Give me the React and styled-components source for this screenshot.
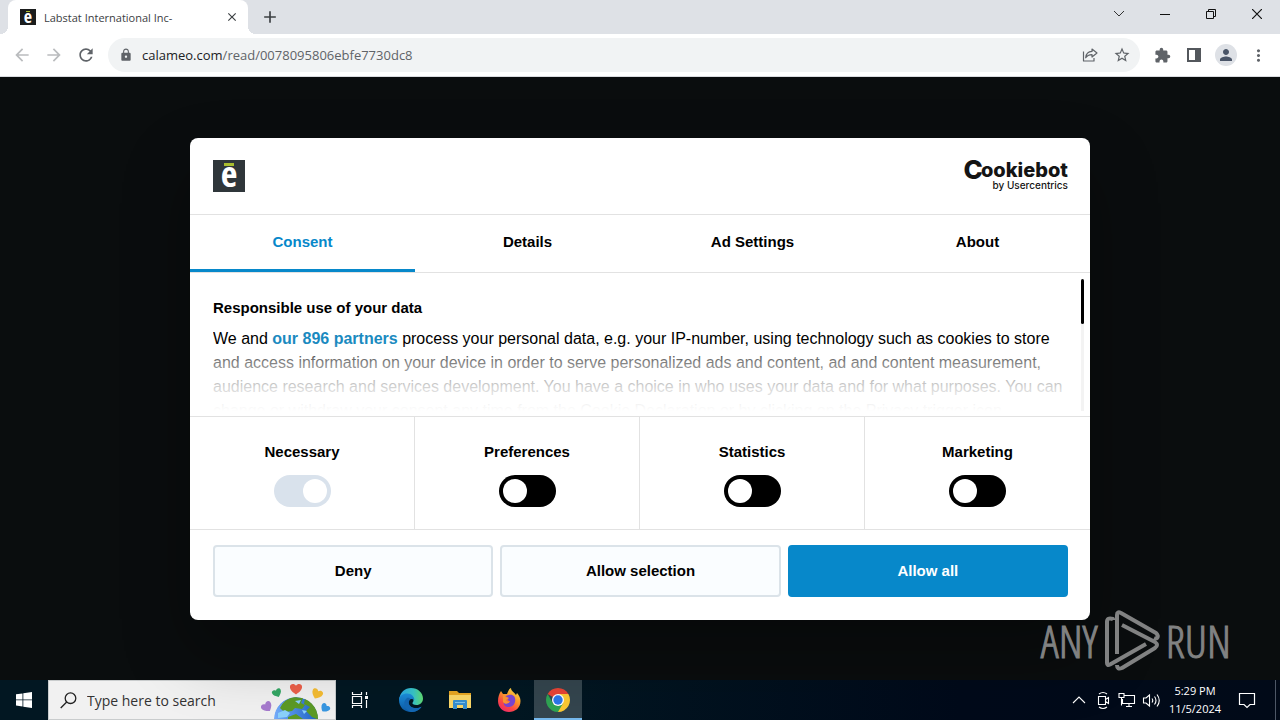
import styled, { createGlobalStyle, css } from 'styled-components'
import {
  MdArrowBack,
  MdArrowForward,
  MdRefresh,
  MdLock,
  MdStarBorder,
  MdExtension,
  MdPerson,
  MdMoreVert,
  MdClose,
  MdAdd
} from 'react-icons/md'

const GlobalStyle = createGlobalStyle`
  *, *::before, *::after {
    box-sizing: border-box;
  }

  body {
    margin: 0;
    font-family: 'Liberation Sans', Arial, sans-serif;
    background-color: #0a0d0e;
  }

  button, input {
    font: inherit;
    margin: 0;
  }
`

const uiFont = "'Open Sans', 'Noto Sans', sans-serif"
const narrowFont = "'Open Sans Condensed', 'Roboto Condensed', 'Liberation Sans Narrow', sans-serif"

const Screen = styled.div`
  display: flex;
  flex-direction: column;
  height: 100vh;
  overflow: hidden;
`

const plainButton = css`
  display: flex;
  align-items: center;
  justify-content: center;
  flex: none;
  padding: 0;
  border: 0;
  background: none;
`

/* Browser window */

const TabStrip = styled.div`
  display: flex;
  height: 34px;
  padding-left: 8px;
  background-color: #dee1e6;
  font-family: ${uiFont};
`

const BrowserTab = styled.div`
  position: relative;
  display: flex;
  align-items: center;
  gap: 8px;
  width: 240px;
  padding: 0 8px 0 12px;
  background-color: #fff;
  border-radius: 8px 8px 0 0;
  color: #3c4043;
  font-size: 11px;

  &::before,
  &::after {
    content: '';
    position: absolute;
    bottom: 0;
    width: 8px;
    height: 8px;
  }

  &::before {
    right: 100%;
    background: radial-gradient(circle at 0 0, #dee1e6 8px, #fff 8px);
  }

  &::after {
    left: 100%;
    background: radial-gradient(circle at 100% 0, #dee1e6 8px, #fff 8px);
  }
`

const TabTitle = styled.span`
  flex: 1;
  white-space: nowrap;
`

const TabButton = styled.button`
  ${plainButton}
  width: ${props => props.$size}px;
  color: #3c4043;
`

const NewTab = styled(TabButton)`
  margin-left: 8px;
`

const WindowControls = styled.div`
  display: flex;
  height: 28px;
  margin-left: auto;
`

const WindowButton = styled.button`
  ${plainButton}
  width: 46px;
`

const Toolbar = styled.div`
  display: flex;
  align-items: center;
  height: 43px;
  padding: 0 6px;
  border-bottom: 1px solid #dadce0;
  background-color: #fff;
  font-family: ${uiFont};
`

const ToolButton = styled.button`
  ${plainButton}
  width: 32px;
  height: 32px;
  color: ${props => (props.$faded ? '#babcbe' : '#5f6368')};
`

const Avatar = styled.span`
  display: flex;
  align-items: center;
  justify-content: center;
  width: 22px;
  height: 22px;
  border-radius: 50%;
  background-color: #dee1e6;
  color: #4a5568;
`

const AddressBar = styled.div`
  display: flex;
  align-items: center;
  flex: 1;
  height: 34px;
  margin: 0 6px;
  padding: 0 2px 0 11px;
  border-radius: 17px;
  background-color: #f1f3f4;
  color: #5f6368;
`

const Address = styled.a`
  flex: 1;
  margin-left: 9px;
  color: #5f6368;
  font-size: 13px;
  text-decoration: none;

  b {
    color: #202124;
    font-weight: 400;
  }
`

/* Brand marks */

const CalameoMark = styled.span`
  position: relative;
  display: flex;
  justify-content: center;
  flex: none;
  width: ${props => props.$size}px;
  height: ${props => props.$size}px;
  background-color: ${props => (props.$size > 20 ? '#2f363a' : '#1b1d1d')};
  color: #fff;
  font-family: ${narrowFont};
  font-size: ${props => (props.$size > 20 ? 36 : 18)}px;
  font-weight: 700;
  line-height: ${props => (props.$size > 20 ? 28 : 14)}px;

  &::after {
    content: '';
    position: absolute;
    top: 12%;
    left: 35%;
    width: 30%;
    height: 9%;
    background-color: #a9bd2f;
  }
`

const CookiebotLogo = styled.a`
  display: flex;
  flex-direction: column;
  align-items: flex-end;
  color: #141414;
  font-family: Inter, sans-serif;
  text-decoration: none;
`

const CookiebotName = styled.span`
  display: flex;
  align-items: center;
  font-size: 20px;
  font-weight: 800;
  line-height: 20px;
`

const CookiebotInitial = styled.span`
  margin-right: -2px;
  font-size: 26px;
`

const CookiebotOwner = styled.span`
  font-size: 10px;
  font-weight: 500;
  line-height: 11px;
`

/* Consent dialog */

const Page = styled.main`
  position: relative;
  display: flex;
  align-items: center;
  justify-content: center;
  flex: 1;
  min-height: 0;
  background-color: #0a0d0e;
`

const Dialog = styled.section`
  width: 100%;
  max-width: 900px;
  border-radius: 8px;
  background-color: #fff;
  box-shadow: 0 32px 68px rgba(0, 0, 0, 0.3);
  color: #141414;
  font-size: 15px;
  line-height: 24px;
`

const DialogHeader = styled.header`
  display: flex;
  align-items: center;
  justify-content: space-between;
  height: 77px;
  padding: 0 22px 0 23px;
  border-bottom: 1px solid #e2e2e2;
`

const DialogTabs = styled.nav`
  display: grid;
  grid-template-columns: repeat(4, 1fr);
  height: 58px;
  border-bottom: 1px solid #e2e2e2;
`

const DialogTab = styled.button`
  ${plainButton}
  padding-top: 1px;
  border-bottom: 3px solid ${props => (props.$active ? '#0788ca' : 'transparent')};
  color: ${props => (props.$active ? '#0788ca' : '#000')};
  font-weight: 700;
`

const DialogBody = styled.div`
  display: flex;
  height: 144px;
  padding: 6px 6px 5px 23px;
  border-bottom: 1px solid #e2e2e2;
`

const Statement = styled.div`
  position: relative;
  flex: 1;
  overflow: hidden;
  padding: 17px 12px 0 0;
  color: #000;

  &::after {
    content: '';
    position: absolute;
    right: 0;
    bottom: 0;
    left: 0;
    height: 68px;
    background: linear-gradient(rgba(255, 255, 255, 0), rgba(255, 255, 255, 0.5) 28%, rgba(255, 255, 255, 0.85) 68%, #fff);
  }
`

const StatementTitle = styled.h2`
  margin: 0 0 7px;
  font-size: 15px;
  line-height: 24px;
`

const StatementText = styled.p`
  margin: 0;
  font-size: 16px;
`

const PartnersLink = styled.a`
  color: #1a8ac0;
  font-weight: 700;
  text-decoration: none;
`

const ScrollTrack = styled.div`
  width: 3px;
  background-color: #f3f3f3;
`

const ScrollThumb = styled.div`
  height: 45px;
  border-radius: 2px;
  background-color: #000;
`

const Choices = styled.div`
  display: grid;
  grid-template-columns: repeat(4, 1fr);
  height: 113px;
  border-bottom: 1px solid #e2e2e2;
`

const Choice = styled.label`
  display: flex;
  flex-direction: column;
  align-items: center;
  gap: 11px;
  padding-top: 23px;
  color: #000;
  font-weight: 700;

  &:not(:last-child) {
    border-right: 1px solid #e2e2e2;
  }
`

const Toggle = styled.input`
  appearance: none;
  display: flex;
  justify-content: flex-start;
  width: 57px;
  height: 32px;
  padding: 4px;
  border-radius: 16px;
  background-color: #000;

  &::before {
    content: '';
    width: 24px;
    height: 24px;
    border-radius: 50%;
    background-color: #fff;
  }

  &:checked {
    justify-content: flex-end;
  }

  &:disabled {
    background-color: #d9e2ec;
  }
`

const Actions = styled.footer`
  display: grid;
  grid-template-columns: repeat(3, 1fr);
  gap: 7px;
  padding: 15px 22px 23px 23px;
`

const Action = styled.button`
  height: 52px;
  border: 2px solid ${props => (props.$primary ? '#0788ca' : '#dbe3e9')};
  border-radius: 4px;
  background-color: ${props => (props.$primary ? '#0788ca' : '#fafdff')};
  color: ${props => (props.$primary ? '#fff' : '#000')};
  font-weight: 700;
`

/* Lies over the page corner */
const Watermark = styled.div`
  position: absolute;
  right: 49px;
  bottom: 8px;
  display: flex;
  align-items: center;
  gap: 6px;
  color: #818282;
  font-family: 'Open Sans Condensed Light', 'Roboto Condensed', 'Liberation Sans Narrow', 'Open Sans Condensed', sans-serif;
  font-size: 45px;
  line-height: 62px;
  -webkit-text-stroke: 1px #818282;
`

/* Taskbar */

const Taskbar = styled.footer`
  display: flex;
  flex: none;
  height: 40px;
  background: linear-gradient(90deg, #021722, #021722 40%, #010a1a 75%, #010a18);
  color: #fff;
  font-family: ${uiFont};
`

const TaskButton = styled.button`
  ${plainButton}
  width: 48px;
  margin-right: ${props => props.$gap || 1}px;
  background-color: ${props => (props.$open ? '#34454e' : 'transparent')};
  box-shadow: ${props => (props.$open ? 'inset 0 -2px #76b9ed' : 'none')};
`

const StartButton = styled.button`
  ${plainButton}
  width: 48px;
`

const SearchBox = styled.label`
  display: flex;
  align-items: center;
  width: 288px;
  padding-left: 11px;
  border: 1px solid #c9cccd;
  background-color: #f1f1f1;
`

const SearchInput = styled.input`
  flex: 1;
  min-width: 0;
  padding: 0 0 0 10px;
  border: 0;
  background: none;
  font-size: 14px;

  &::placeholder {
    color: #333;
    opacity: 1;
  }
`

const Tray = styled.div`
  display: flex;
  align-items: center;
  margin-left: auto;
`

const TrayButton = styled.button`
  ${plainButton}
  width: 24px;
  height: 40px;
`

const Clock = styled.time`
  width: 64px;
  font-size: 11px;
  line-height: 18px;
  text-align: center;
`

const ActionCenter = styled(TrayButton)`
  width: 40px;
  margin-right: 8px;
`

const ShowDesktop = styled.button`
  ${plainButton}
  width: 5px;
  height: 40px;
  border-left: 1px solid #4d5766;
`

const ShareIcon = () => (
  <svg width="16" height="16" viewBox="0 0 16 16" fill="none" stroke="#5f6368" strokeWidth="1.2" strokeLinejoin="round">
    <path d="M1.500 4.500v9.500h10.500v-3M10 2l5 4-5 4V7.600C7 7.600 5 8.500 3.700 10.800 4 7 6.500 4.600 10 4.400z" />
  </svg>
)

const SidePanelIcon = () => (
  <svg width="14" height="14" viewBox="0 0 14 14">
    <path d="M0 0h14v14H0zM2 2v10h6V2z" fill="#53575c" fillRule="evenodd" />
  </svg>
)

const WatermarkIcon = () => (
  <svg width="56" height="62" viewBox="0 0 56 62" fill="none" stroke="#818282" strokeWidth="4" strokeLinejoin="round">
    <path d="M9 10V9q-6-2-6 3v41q0 3 3 1.500L42 34" />
    <path d="M13 44V5q0-4 4-2l35 20q3 3 1 5-1 1-3 0" />
    <path d="M18 15l33 17q4 3 0 6L18 58q-5 2-5-3" />
  </svg>
)

const WindowsIcon = () => (
  <svg width="16" height="16" viewBox="0 0 16 16" fill="#fff">
    <path d="M0 2.300l6.500-.9v6.100H0zM7.300 1.300L16 0v7.500H7.300zM0 8.300h6.500v6.200L0 13.600zM7.300 8.300H16V16l-8.700-1.300z" />
  </svg>
)

const SearchIcon = () => (
  <svg width="17" height="17" viewBox="0 0 17 17" fill="none" stroke="#222" strokeWidth="1.300">
    <circle cx="10.500" cy="6.200" r="5.300" />
    <path d="M6.700 10L.7 16" />
  </svg>
)

const heart = 'M0 5C-3 3-5.500 1-5.500-2-5.500-5-1.500-5.500 0-3 1.500-5.500 5.500-5 5.500-2 5.500 1 3 3 0 5z'

const EarthHearts = () => (
  <svg width="74" height="38" viewBox="0 0 74 38">
    <defs>
      <clipPath id="earth">
        <circle cx="35" cy="38" r="22" />
      </clipPath>
      <linearGradient id="sea">
        <stop offset="0" stopColor="#75adfa" />
        <stop offset="1" stopColor="#1c62c7" />
      </linearGradient>
    </defs>
    <g clipPath="url(#earth)">
      <circle cx="35" cy="38" r="22" fill="url(#sea)" />
      <path d="M19 27q4-9 14-11l9 1-2 5 4 2-3 4-7-1-3 3-7 1-3-2zM44 17q10 4 14 14v8l-7-3-6-6 4-4-6-3zM27 36l8-3 7 5H27z" fill="#5c9a25" />
      <path d="M17 32l7-3 5 3-3 4-9 1zM41 29l5 1-3 3zM34 20l6-1-2 4z" fill="#8bd1fb" />
    </g>
    <path d={heart} transform="translate(35 8) scale(1.100)" fill="#ed604a" />
    <path d={heart} transform="translate(16 12) rotate(-24) scale(.85)" fill="#34a764" />
    <path d={heart} transform="translate(56 13) rotate(25)" fill="#f5bd33" />
    <path d={heart} transform="translate(6 26) rotate(-35)" fill="#a67bce" />
    <path d={heart} transform="translate(64 27) rotate(40) scale(.85)" fill="#3897e2" />
  </svg>
)

const TaskViewIcon = () => (
  <svg width="18" height="16" viewBox="0 0 18 16" fill="none" stroke="#fff" strokeWidth="1.200">
    <path d="M1.500 0v2.500h9V0M1.500 16v-2.500h9V16M1.500 4.500h9v7h-9zM15.500 0v3M15.500 8v8" />
    <path d="M14 4h3v3h-3z" fill="#fff" stroke="none" />
  </svg>
)

const EdgeIcon = () => (
  <svg width="24" height="24" viewBox="0 0 24 24">
    <defs>
      <linearGradient id="edgeTop">
        <stop offset="0" stopColor="#2aa7e8" />
        <stop offset=".6" stopColor="#38c5c8" />
        <stop offset="1" stopColor="#5fdb70" />
      </linearGradient>
      <linearGradient id="edgeLow" x2="0" y2="1">
        <stop offset="0" stopColor="#1c8fdc" />
        <stop offset="1" stopColor="#0c59a4" />
      </linearGradient>
    </defs>
    <path d="M0 12C1 4 6 0 12 0c7 0 12 5 12 10.500 0 4-3 6.500-6.500 6.500-3 0-4.500-1.200-4-2.200C16 12 14 8 9 8c-4 0-7 2-9 4z" fill="url(#edgeTop)" />
    <path d="M0 12c0-4 4-6.500 8-6.500 5 0 7.500 3.500 7.300 6.500C12 9.500 9 12 9.500 15c.5 4 5 6.500 9 5.500 2-.5 3-1.500 4-1.800C20.500 22 16 24 12 24 5 24 0 19 0 12z" fill="url(#edgeLow)" />
    <path d="M8 10c-5 4-3 12 4 14 4 0 8-1.500 10.500-5.300C17 21.500 11 19.500 10 16c-.6-2 .2-3.500 1.300-4.500C11 10 9.500 9.400 8 10z" fill="#1468b4" />
  </svg>
)

const ExplorerIcon = () => (
  <svg width="22" height="20" viewBox="0 0 22 20">
    <path d="M0 1h8l2 2h12v4H0z" fill="#e8a723" />
    <path d="M0 5h22v13H0z" fill="#fbd868" />
    <path d="M4 11q0-1 1-1h12q1 0 1 1v8h-4v-4H8v4H4z" fill="#368fd0" />
    <path d="M6 12h10v1H6z" fill="#7cc3ef" />
  </svg>
)

const FirefoxIcon = () => (
  <svg width="24" height="24" viewBox="0 0 24 24">
    <defs>
      <linearGradient id="fox" x1=".8" y1="0" x2=".2" y2="1">
        <stop offset="0" stopColor="#ffe14a" />
        <stop offset=".4" stopColor="#ff9a2a" />
        <stop offset=".7" stopColor="#ff4a45" />
        <stop offset="1" stopColor="#f0286c" />
      </linearGradient>
    </defs>
    <path d="M4 3l2 3h4c1-3 2-5 4-6 0 3 3 4 5 7l1-2c2 2 3.500 5 3.500 8C23.500 20 18 24 12 24S1 19.500 1 13c0-4 1-7 3-10z" fill="url(#fox)" />
    <path d="M8 8l4-1c5-1 7 3 6 7s-4 5-7 5-5-3-4-5c2 2 5 1 6-1-2 0-3-1-2-2l1-1z" fill="#7a45d4" />
    <path d="M6 6l4 1-2 2 3 1-2 2c1 2 3 2 4 1-1 3-5 4-7 1z" fill="#ff9633" />
  </svg>
)

const ChromeIcon = () => (
  <svg width="24" height="24" viewBox="0 0 24 24">
    <path d="M12 12L1.610 6A12 12 0 0 1 22.390 6z" fill="#e94435" />
    <path d="M12 12V6h10.390A12 12 0 0 1 12 24z" fill="#fcc934" />
    <path d="M1.610 6l5.200 9L12 18l5.200-3L12 24A12 12 0 0 1 1.610 6z" fill="#2fa453" />
    <circle cx="12" cy="12" r="6" fill="#fff" />
    <circle cx="12" cy="12" r="4.700" fill="#2b77ea" />
  </svg>
)

const trayIcons = [
  { id: 'Show hidden icons', d: 'M3 12l6-6 6 6' },
  { id: 'Meet now', d: 'M4.500 5.500h7v8h-7zM11.500 8.500l3-2v6l-3-2M5 3q4-3 8 0M5 16q4 3 8 0' },
  { id: 'Network', d: 'M6 4.500h10.500v8H4.500V8M8 15.500h6M11 12.500v3M1 2.500h5v4H1zM3.500 6.500v8' },
  { id: 'Volume', d: 'M1.500 7v5h2.500l3.500 3V4L4 7zM10 7.500q1.500 2 0 4M12.500 5.500q3 4 0 8M15 3.500q4.500 6 0 12' }
]

const consentTabs = ['Consent', 'Details', 'Ad Settings', 'About']

const choices = [
  { name: 'Necessary', required: true },
  { name: 'Preferences' },
  { name: 'Statistics' },
  { name: 'Marketing' }
]

const Browser = () => (
  <header>
    <TabStrip>
      <BrowserTab>
        <CalameoMark $size={16}>e</CalameoMark>
        <TabTitle>Labstat International Inc-</TabTitle>
        <TabButton $size={16} aria-label="Close tab">
          <MdClose size={14} />
        </TabButton>
      </BrowserTab>
      <NewTab $size={28} aria-label="New tab">
        <MdAdd size={20} />
      </NewTab>
      <WindowControls>
        <WindowButton aria-label="Search tabs">
          <svg width="12" height="8" fill="none" stroke="#333">
            <path d="M1 1l5 5 5-5" />
          </svg>
        </WindowButton>
        <WindowButton aria-label="Minimize">
          <svg width="10" height="10" stroke="#111">
            <path d="M0 5.500h10" />
          </svg>
        </WindowButton>
        <WindowButton aria-label="Restore">
          <svg width="10" height="10" fill="none" stroke="#111">
            <path d="M.5 2.500h7v7h-7zM2.500 2.500v-2h7v7h-2" />
          </svg>
        </WindowButton>
        <WindowButton aria-label="Close">
          <svg width="10" height="10" stroke="#111" strokeWidth="1.200">
            <path d="M0 0l10 10M10 0L0 10" />
          </svg>
        </WindowButton>
      </WindowControls>
    </TabStrip>
    <Toolbar>
      <ToolButton $faded aria-label="Back">
        <MdArrowBack size={20} />
      </ToolButton>
      <ToolButton $faded aria-label="Forward">
        <MdArrowForward size={20} />
      </ToolButton>
      <ToolButton aria-label="Reload">
        <MdRefresh size={20} />
      </ToolButton>
      <AddressBar>
        <MdLock size={14} />
        <Address href="#read">
          <b>calameo.com</b>/read/0078095806ebfe7730dc8
        </Address>
        <ToolButton aria-label="Share">
          <ShareIcon />
        </ToolButton>
        <ToolButton aria-label="Bookmark">
          <MdStarBorder size={18} />
        </ToolButton>
      </AddressBar>
      <ToolButton aria-label="Extensions">
        <MdExtension size={17} />
      </ToolButton>
      <ToolButton aria-label="Side panel">
        <SidePanelIcon />
      </ToolButton>
      <ToolButton aria-label="Profile">
        <Avatar>
          <MdPerson size={18} />
        </Avatar>
      </ToolButton>
      <ToolButton aria-label="Menu">
        <MdMoreVert size={19} />
      </ToolButton>
    </Toolbar>
  </header>
)

const ConsentDialog = () => (
  <Dialog role="dialog" aria-label="Consent">
    <DialogHeader>
      <CalameoMark $size={32}>e</CalameoMark>
      <CookiebotLogo href="#cookiebot">
        <CookiebotName>
          <CookiebotInitial>C</CookiebotInitial>ookiebot
        </CookiebotName>
        <CookiebotOwner>by Usercentrics</CookiebotOwner>
      </CookiebotLogo>
    </DialogHeader>

    <DialogTabs>
      {consentTabs.map((tab, index) => (
        <DialogTab key={tab} $active={index === 0}>
          {tab}
        </DialogTab>
      ))}
    </DialogTabs>

    <DialogBody>
      <Statement>
        <StatementTitle>Responsible use of your data</StatementTitle>
        <StatementText>
          We and <PartnersLink href="#partners">our 896 partners</PartnersLink> process your personal
          data, e.g. your IP-number, using technology such as cookies to store and access information
          on your device in order to serve personalized ads and content, ad and content measurement,
          audience research and services development. You have a choice in who uses your data and for
          what purposes. You can change or withdraw your consent any time from the Cookie Declaration
          or by clicking on the Privacy trigger icon.
        </StatementText>
      </Statement>
      <ScrollTrack>
        <ScrollThumb />
      </ScrollTrack>
    </DialogBody>

    <Choices>
      {choices.map(choice => (
        <Choice key={choice.name}>
          {choice.name}
          <Toggle
            type="checkbox"
            defaultChecked={choice.required}
            disabled={choice.required}
          />
        </Choice>
      ))}
    </Choices>

    <Actions>
      <Action>Deny</Action>
      <Action>Allow selection</Action>
      <Action $primary>Allow all</Action>
    </Actions>
  </Dialog>
)

const App = () => (
  <Screen>
    <GlobalStyle />
    <Browser />

    <Page>
      <ConsentDialog />
      <Watermark>
        ANY
        <WatermarkIcon />
        RUN
      </Watermark>
    </Page>

    <Taskbar>
      <StartButton aria-label="Start">
        <WindowsIcon />
      </StartButton>
      <SearchBox>
        <SearchIcon />
        <SearchInput type="text" placeholder="Type here to search" aria-label="Search" />
        <EarthHearts />
      </SearchBox>
      <TaskButton $gap={3} aria-label="Task view">
        <TaskViewIcon />
      </TaskButton>
      <TaskButton aria-label="Edge">
        <EdgeIcon />
      </TaskButton>
      <TaskButton aria-label="File Explorer">
        <ExplorerIcon />
      </TaskButton>
      <TaskButton aria-label="Firefox">
        <FirefoxIcon />
      </TaskButton>
      <TaskButton $open aria-label="Chrome">
        <ChromeIcon />
      </TaskButton>
      <Tray>
        {trayIcons.map(icon => (
          <TrayButton key={icon.id} aria-label={icon.id}>
            <svg width="18" height="19" viewBox="0 0 18 19" fill="none" stroke="#fff" strokeWidth="1.100">
              <path d={icon.d} />
            </svg>
          </TrayButton>
        ))}
        <Clock>
          5:29 PM
          <br />
          11/5/2024
        </Clock>
        <ActionCenter aria-label="Notifications">
          <svg width="18" height="18" viewBox="0 0 18 18" fill="none" stroke="#fff" strokeWidth="1.200">
            <path d="M1.500 2.500h15v11H12L9 16.500l-3-3H1.500z" />
          </svg>
        </ActionCenter>
        <ShowDesktop aria-label="Show desktop" />
      </Tray>
    </Taskbar>
  </Screen>
)

export default App
